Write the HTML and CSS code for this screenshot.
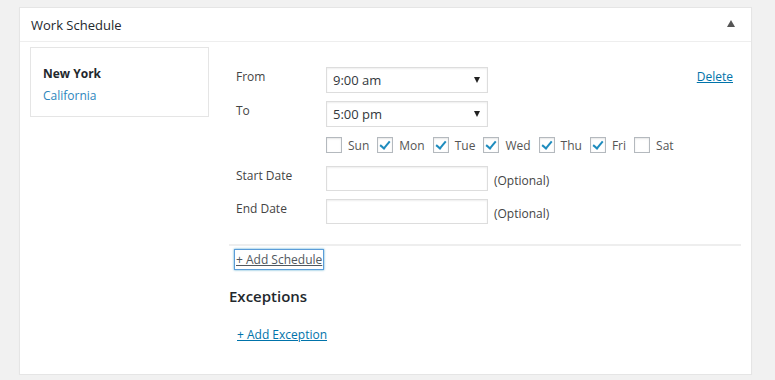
FILE: index.html
```html
<!DOCTYPE html>
<html lang="en">
<head>
    <meta charset="UTF-8">
    <meta name="viewport" content="width=device-width, initial-scale=1.0">
    <title>Work Schedule</title>
    <link rel="stylesheet" href="styles.css">
</head>
<body>
    <div class="postbox">
        <div class="postbox-header">
            <h2>Work Schedule</h2>
            <span class="toggle"></span>
        </div>
        <div class="inside">
            <ul class="locations">
                <li class="current">New York</li>
                <li><a href="#">California</a></li>
            </ul>
            <div class="main">
                <div class="schedule">
                    <div class="fields">
                        <label>From</label>
                        <div class="select"><span>9:00 am</span><i class="arrow"></i></div>
                        <label>To</label>
                        <div class="select"><span>5:00 pm</span><i class="arrow"></i></div>
                        <span></span>
                        <div class="days">
                            <span class="day"><i class="box"></i>Sun</span>
                            <span class="day"><i class="box checked"></i>Mon</span>
                            <span class="day"><i class="box checked"></i>Tue</span>
                            <span class="day"><i class="box checked"></i>Wed</span>
                            <span class="day"><i class="box checked"></i>Thu</span>
                            <span class="day"><i class="box checked"></i>Fri</span>
                            <span class="day"><i class="box"></i>Sat</span>
                        </div>
                        <label>Start Date</label>
                        <div class="date"><span class="input"></span><span class="hint">(Optional)</span></div>
                        <label>End Date</label>
                        <div class="date"><span class="input"></span><span class="hint">(Optional)</span></div>
                    </div>
                    <a href="#" class="delete">Delete</a>
                </div>
                <div class="separator"></div>
                <a href="#" class="add-schedule">+ Add Schedule</a>
                <h3>Exceptions</h3>
                <a href="#" class="add-exception">+ Add Exception</a>
            </div>
        </div>
    </div>
</body>
</html>
```

FILE: styles.css
```css
body {
    margin: 0;
    background: #f1f1f1;
    font-family: 'Open Sans', 'Noto Sans', sans-serif;
    font-size: 12px;
    color: #444;
}
.postbox {
    margin: 7px 0 0 19px;
    width: 733px;
    height: 368px;
    background: #fff;
    border: 1px solid #e5e5e5;
    box-shadow: 0 1px 1px rgba(0, 0, 0, 0.04);
    box-sizing: border-box;
}
.postbox-header {
    display: flex;
    justify-content: space-between;
    align-items: center;
    height: 33px;
    padding: 0 16px 0 11px;
    border-bottom: 1px solid #eee;
}
.postbox-header h2 {
    margin: 0;
    font-size: 13px;
    font-weight: 400;
    color: #23282d;
}
.toggle {
    width: 0;
    height: 0;
    border-left: 4px solid transparent;
    border-right: 4px solid transparent;
    border-bottom: 7px solid #555;
    margin-top: -2px;
}
.inside {
    display: flex;
    gap: 20px;
    padding: 5px 10px 0 10px;
}
.locations {
    list-style: none;
    margin: 0;
    padding: 15px 12px;
    width: 179px;
    height: 70px;
    box-sizing: border-box;
    border: 1px solid #e5e5e5;
}
.locations li {
    line-height: 22px;
    color: #23282d;
}
.locations .current {
    font-weight: 700;
}
.locations a {
    color: #2e86bd;
    text-decoration: none;
}
.main {
    flex: 1;
}
.schedule {
    display: flex;
    justify-content: space-between;
    padding: 20px 8px 0 7px;
}
.fields {
    display: grid;
    grid-template-columns: 90px auto;
    row-gap: 8px;
    align-items: start;
}
.fields label {
    padding-top: 1px;
    color: #444;
}
.select {
    display: flex;
    justify-content: space-between;
    align-items: center;
    width: 162px;
    height: 26px;
    box-sizing: border-box;
    border: 1px solid #ddd;
    box-shadow: inset 0 1px 2px rgba(0, 0, 0, 0.07);
    padding: 0 7px 0 6px;
    font-size: 13px;
    color: #32373c;
}
.arrow {
    width: 0;
    height: 0;
    border-left: 3px solid transparent;
    border-right: 3px solid transparent;
    border-top: 6px solid #222;
}
.days {
    display: flex;
    gap: 8px;
    height: 16px;
    padding-top: 2px;
    margin-bottom: 5px;
}
.day {
    display: flex;
    align-items: center;
    gap: 6px;
    color: #555;
}
.box {
    display: inline-block;
    position: relative;
    width: 16px;
    height: 16px;
    box-sizing: border-box;
    border: 1px solid #b4b9be;
    box-shadow: inset 0 1px 2px rgba(0, 0, 0, 0.1);
}
.box.checked::after {
    content: "";
    position: absolute;
    left: 4px;
    top: 1px;
    width: 4px;
    height: 8px;
    border-right: 2px solid #1e8cbe;
    border-bottom: 2px solid #1e8cbe;
    transform: rotate(40deg);
}
.date {
    display: flex;
    align-items: center;
    gap: 6px;
}
.input {
    display: block;
    width: 162px;
    height: 25px;
    box-sizing: border-box;
    border: 1px solid #ddd;
    box-shadow: inset 0 1px 2px rgba(0, 0, 0, 0.07);
}
.hint {
    color: #444;
    padding-top: 4px;
}
.delete {
    color: #0073aa;
    padding-top: 1px;
}
.separator {
    height: 2px;
    background: #eee;
    margin: 20px 0 4px 0;
}
.add-schedule {
    display: inline-block;
    margin-left: 6px;
    padding: 0 1px;
    color: #50575e;
    line-height: 19px;
    box-shadow: 0 0 0 1px #5b9dd9, 0 0 2px 1px rgba(30, 140, 190, 0.8);
}
.main h3 {
    margin: 17px 0 0 0;
    font-size: 15px;
    font-weight: 600;
    color: #23282d;
}
.add-exception {
    display: inline-block;
    margin: 20px 0 0 8px;
    color: #0073aa;
}
```
